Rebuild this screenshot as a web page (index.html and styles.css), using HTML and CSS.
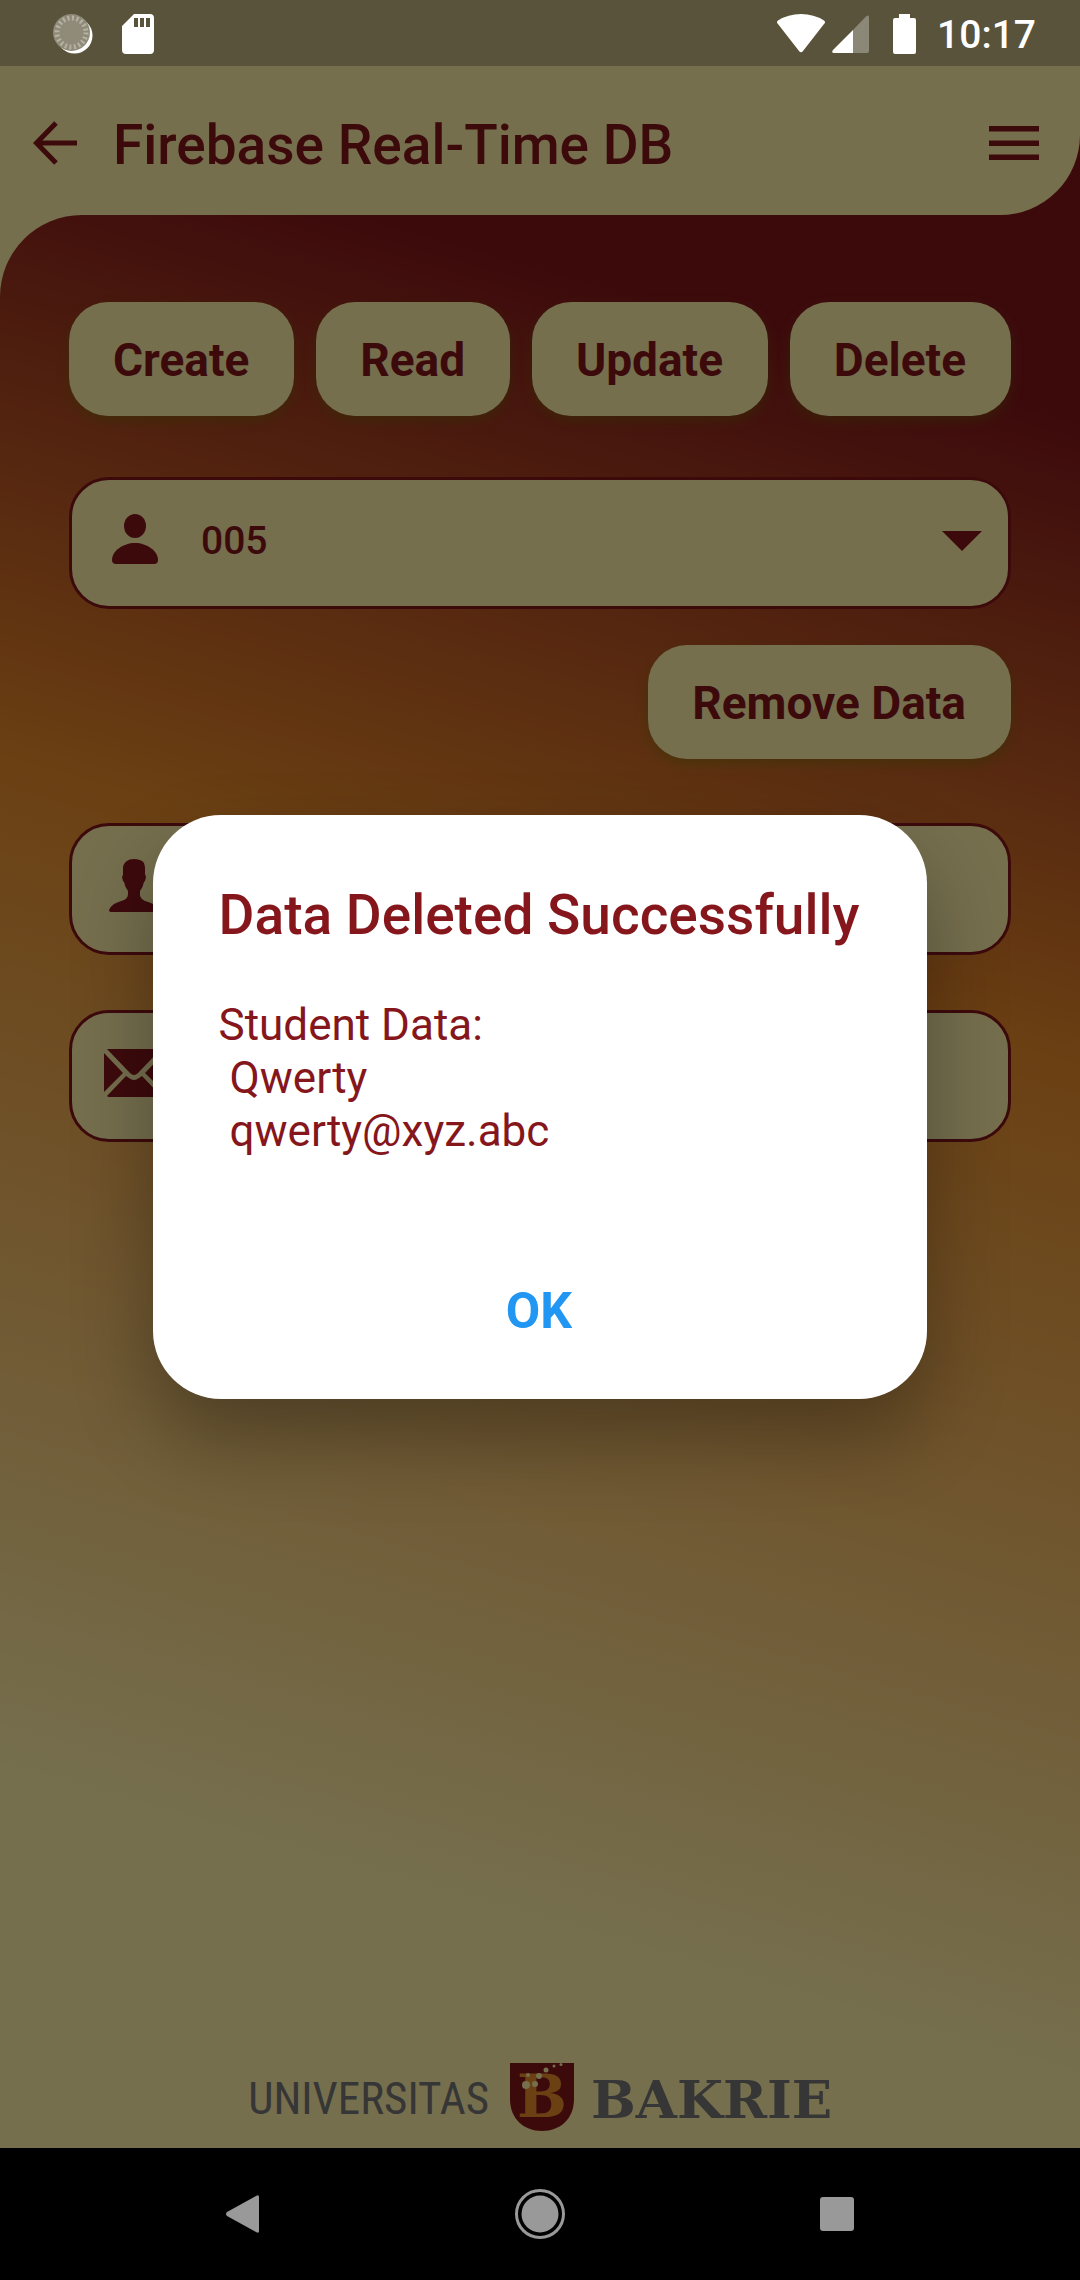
FILE: index.html
```html
<!DOCTYPE html>
<html lang="en">
<head>
<meta charset="utf-8">
<meta name="viewport" content="width=device-width, initial-scale=1">
<title>Firebase Real-Time DB</title>
<link rel="stylesheet" href="styles.css">
</head>
<body>
<div class="screen">
  <div class="status-bar">
    <div class="status-group status-left">
      <svg width="40" height="40" viewBox="0 0 40 40" aria-hidden="true">
        <circle cx="21.500" cy="21.500" r="18" fill="#fff"/>
        <circle cx="18.500" cy="18.500" r="18.500" fill="#8f8b78"/>
        <circle cx="18.500" cy="18.500" r="14.500" fill="none" stroke="#b5b2a3" stroke-width="5" stroke-dasharray="2 2.555"/>
      </svg>
      <svg width="32" height="40" viewBox="0 0 32 40" aria-hidden="true">
        <path fill="#fff" fill-rule="evenodd" d="M12 0H28Q32 0 32 4V36Q32 40 28 40H4Q0 40 0 36V12ZM12 4V13H16V4ZM18 4V13H22V4ZM24 4V13H28V4Z"/>
      </svg>
    </div>
    <div class="status-group status-right">
      <svg class="wifi" width="48" height="40" viewBox="0 0 48 40" aria-hidden="true">
        <path fill="#fff" d="M1 10Q-1 8 1 6.500Q11 0 24 0T47 6.500Q49 8 47 10L26 37Q24 39.500 22 37Z"/>
      </svg>
      <svg class="signal" width="37" height="40" viewBox="0 0 37 40" aria-hidden="true">
        <path fill="#8b8877" d="M21 16L34 2.500Q37 0 37 4V37Q37 39 35 39H21Z"/>
        <path fill="#fff" d="M21 16V39H2Q-1 39 1 36Z"/>
      </svg>
      <svg class="battery" width="23" height="40" viewBox="0 0 23 40" aria-hidden="true">
        <path fill="#fff" d="M6 0H17V4H21Q23 4 23 6V38Q23 40 21 40H2Q0 40 0 38V6Q0 4 2 4H6Z"/>
      </svg>
      <time class="clock">10:17</time>
    </div>
  </div>

  <div class="app">
    <header class="app-bar-wrap">
      <div class="app-bar">
        <button class="icon-button" type="button" aria-label="Back">
          <svg width="44" height="44" viewBox="0 0 44 44" aria-hidden="true">
            <path fill="none" stroke="currentColor" stroke-width="5" d="M44 22H4M23 2L3.500 22L23 42"/>
          </svg>
        </button>
        <h1 class="app-title">Firebase Real-Time DB</h1>
        <button class="icon-button" type="button" aria-label="Menu">
          <svg width="50" height="34" viewBox="0 0 50 34" aria-hidden="true">
            <path fill="currentColor" d="M0 0H50V5.500H0ZM0 14.500H50V20H0ZM0 28.500H50V34H0Z"/>
          </svg>
        </button>
      </div>
    </header>

    <main class="content">
      <div class="actions">
        <button class="button" type="button">Create</button>
        <button class="button" type="button">Read</button>
        <button class="button" type="button">Update</button>
        <button class="button" type="button">Delete</button>
      </div>

      <div class="field field-select">
        <svg class="field-icon" width="64" height="64" viewBox="0 0 64 64" aria-hidden="true">
          <ellipse cx="33" cy="18" rx="11" ry="12" fill="currentColor"/>
          <path fill="currentColor" d="M10 52C10 43 21 35 33 35S56 43 56 52Q56 56 52 56H14Q10 56 10 52Z"/>
        </svg>
        <select class="field-input" aria-label="Student ID">
          <option selected>005</option>
        </select>
        <svg class="caret" width="40" height="20" viewBox="0 0 40 20" aria-hidden="true">
          <path fill="currentColor" d="M0 0H40L20 20Z"/>
        </svg>
      </div>

      <button class="button button-remove" type="button">Remove Data</button>

      <div class="field field-name">
        <svg class="field-icon" width="64" height="64" viewBox="0 0 64 64" aria-hidden="true">
          <path fill="currentColor" d="M32 5C36 5 40 6 42 9L43 13V20L44 23L43 27L42 28Q41 33 38 37V42Q39 45 43 47C50 49 57 52 57 56Q57 58 55 58H9Q7 58 7 56Q8 53 12 50Q16 48 22 46Q26 44 26 40V37Q23 33 22 28L21 27L20 23L21 21V13C22 8 26 5 32 5Z"/>
        </svg>
        <input class="field-input" type="text" aria-label="Name">
      </div>

      <div class="field field-email">
        <svg class="field-icon" width="64" height="64" viewBox="0 0 64 64" aria-hidden="true">
          <path fill="currentColor" d="M5 8H59L36 32Q32 36 28 32ZM2 12L21 32L2 51ZM62 12L43 32L62 51ZM24 35L27 37Q32 41 37 37L40 35L59 55Q58 56 57 56H7Q6 56 5 55Z"/>
        </svg>
        <input class="field-input" type="email" aria-label="Email">
      </div>

      <footer class="brand">
        <span class="brand-narrow">UNIVERSITAS</span>
        <svg class="brand-shield" width="64" height="68" viewBox="0 0 64 68" aria-hidden="true">
          <path fill="#85161b" d="M0 0H64V36C64 56 50 68 32 68S0 56 0 36Z"/>
          <text class="shield-letter" x="7" y="54">B</text>
          <g fill="#fff1aa">
            <circle cx="16" cy="22" r="4"/><circle cx="25" cy="21" r="3"/>
            <circle cx="18" cy="12" r="2"/><circle cx="29" cy="13" r="3"/>
            <circle cx="36" cy="7" r="2.500"/><circle cx="44" cy="3" r="1.500"/>
            <circle cx="51" cy="1.500" r="1.500"/>
          </g>
        </svg>
        <span class="brand-wide">BAKRIE</span>
      </footer>
    </main>

    <div class="backdrop">
      <section class="dialog" role="dialog" aria-modal="true" aria-labelledby="dialog-title">
        <h2 class="dialog-title" id="dialog-title">Data Deleted Successfully</h2>
        <p class="dialog-text">Student Data:
 Qwerty
 qwerty@xyz.abc</p>
        <button class="dialog-ok" type="button">OK</button>
      </section>
    </div>
  </div>

  <nav class="nav-bar" aria-label="System">
    <button class="nav-button" type="button" aria-label="Back">
      <svg width="34" height="38" viewBox="0 0 34 38" aria-hidden="true">
        <path fill="#999" d="M33 2V36Q33 39 30 37L1 21Q-1 19 1 17L30 1Q33 -1 33 2Z"/>
      </svg>
    </button>
    <button class="nav-button" type="button" aria-label="Home">
      <svg width="50" height="50" viewBox="0 0 50 50" aria-hidden="true">
        <circle cx="25" cy="25" r="23.500" fill="none" stroke="#999" stroke-width="3"/>
        <circle cx="25" cy="25" r="18.500" fill="#999"/>
      </svg>
    </button>
    <button class="nav-button" type="button" aria-label="Overview">
      <svg width="34" height="34" viewBox="0 0 34 34" aria-hidden="true">
        <rect width="34" height="34" rx="3" fill="#999"/>
      </svg>
    </button>
  </nav>
</div>
</body>
</html>
```
FILE: styles.css
```css
:root {
  --cream: #fff1aa;
  --maroon: #85161b;
  --orange: #e98c2a;
}

* {
  box-sizing: border-box;
}

body {
  margin: 0;
  font-family: Roboto, "Liberation Sans", sans-serif;
  color: var(--maroon);
  background: #000;
}

button,
select,
input {
  margin: 0;
  padding: 0;
  border: 0;
  background: none;
  color: inherit;
  font: inherit;
}

svg {
  display: block;
  flex: none;
}

.screen {
  display: flex;
  flex-direction: column;
  min-height: 100vh;
}

/* System status bar */
.status-bar {
  display: flex;
  align-items: center;
  justify-content: space-between;
  height: 66px;
  padding: 1px 44px 0 53px;
  background: #59533b;
  color: #fff;
}

.status-group {
  display: flex;
  align-items: center;
}

.status-left {
  gap: 29px;
}

.signal {
  margin-left: 7px;
}

.battery {
  margin-left: 24px;
}

.clock {
  margin-left: 21px;
  padding-top: 2px;
  font-size: 39px;
  font-weight: 500;
  line-height: 48px;
}

/* Application */
.app {
  position: relative;
  display: flex;
  flex: 1;
  flex-direction: column;
  background: var(--cream);
}

.app-bar-wrap {
  background: linear-gradient(90deg, var(--cream) 50%, var(--maroon) 50%);
}

.app-bar {
  display: flex;
  align-items: center;
  height: 149px;
  padding: 4px 41px 0 33px;
  border-bottom-right-radius: 80px;
  background: var(--cream);
}

.app-title {
  flex: 1;
  margin: 0 0 0 36px;
  padding-top: 4px;
  font-size: 55px;
  font-weight: 500;
  line-height: 66px;
}

.content {
  display: flex;
  flex: 1;
  flex-direction: column;
  padding: 87px 69px 17px;
  border-top-left-radius: 82px;
  background: linear-gradient(196deg, var(--maroon) 9%, var(--orange) 38%, var(--cream) 83%);
}

.actions {
  display: flex;
  justify-content: space-between;
}

.button {
  height: 114px;
  padding: 2px 45px 0 44px;
  border-radius: 39px;
  background: var(--cream);
  box-shadow: 0 5px 12px rgba(100, 120, 0, 0.4);
  font-size: 46px;
  font-weight: 700;
}

.button-remove {
  align-self: flex-end;
  margin-top: 36px;
}

.field {
  display: flex;
  align-items: center;
  height: 132px;
  padding: 0 26px 4px 30px;
  border: 3px solid var(--maroon);
  border-radius: 40px;
  background: var(--cream);
}

.field-select {
  margin-top: 61px;
}

.field-name {
  margin-top: 64px;
}

.field-email {
  margin-top: 55px;
}

.field-icon {
  margin-bottom: 2px;
}

.field-input {
  flex: 1;
  min-width: 0;
  margin-left: 35px;
  appearance: none;
  outline: 0;
  font-size: 39px;
  font-weight: 500;
}

/* University logotype */
.brand {
  display: grid;
  grid-template-columns: 1fr auto 1fr;
  align-items: center;
  margin-top: auto;
  color: #777;
}

.brand-narrow {
  justify-self: end;
  padding-top: 4px;
  font-family: "Roboto Condensed", "Liberation Sans Narrow", "Liberation Sans", sans-serif;
  font-size: 45px;
  line-height: 64px;
}

.brand-shield {
  margin: 0 17px 0 21px;
}

.shield-letter {
  fill: var(--orange);
  font: 700 59px "DejaVu Serif", serif;
}

.brand-wide {
  padding-top: 4px;
  font-family: "DejaVu Serif", serif;
  font-size: 53px;
  font-weight: 700;
  line-height: 64px;
}

/* Dialog */
.backdrop {
  position: absolute;
  inset: 0;
  display: flex;
  align-items: center;
  justify-content: center;
  background: rgba(0, 0, 0, 0.54);
}

.dialog {
  display: flex;
  flex-direction: column;
  align-items: flex-start;
  padding: 67px 68px 25px 66px;
  border-radius: 68px;
  background: #fff;
  box-shadow: 0 40px 80px rgba(0, 0, 0, 0.3);
}

.dialog-title {
  margin: 0;
  font-size: 55px;
  font-weight: 500;
  line-height: 66px;
}

.dialog-text {
  margin: 51px 0 0;
  font-size: 44px;
  line-height: 53px;
  white-space: pre-wrap;
}

.dialog-ok {
  align-self: center;
  margin-top: 90px;
  padding: 0 42px;
  color: #2196f3;
  font-size: 50px;
  font-weight: 700;
  line-height: 126px;
}

/* System navigation */
.nav-bar {
  display: flex;
  align-items: center;
  justify-content: center;
  gap: 197px;
  height: 132px;
  background: #000;
}

.nav-button {
  display: flex;
  align-items: center;
  justify-content: center;
  width: 100px;
  height: 100px;
}
```
